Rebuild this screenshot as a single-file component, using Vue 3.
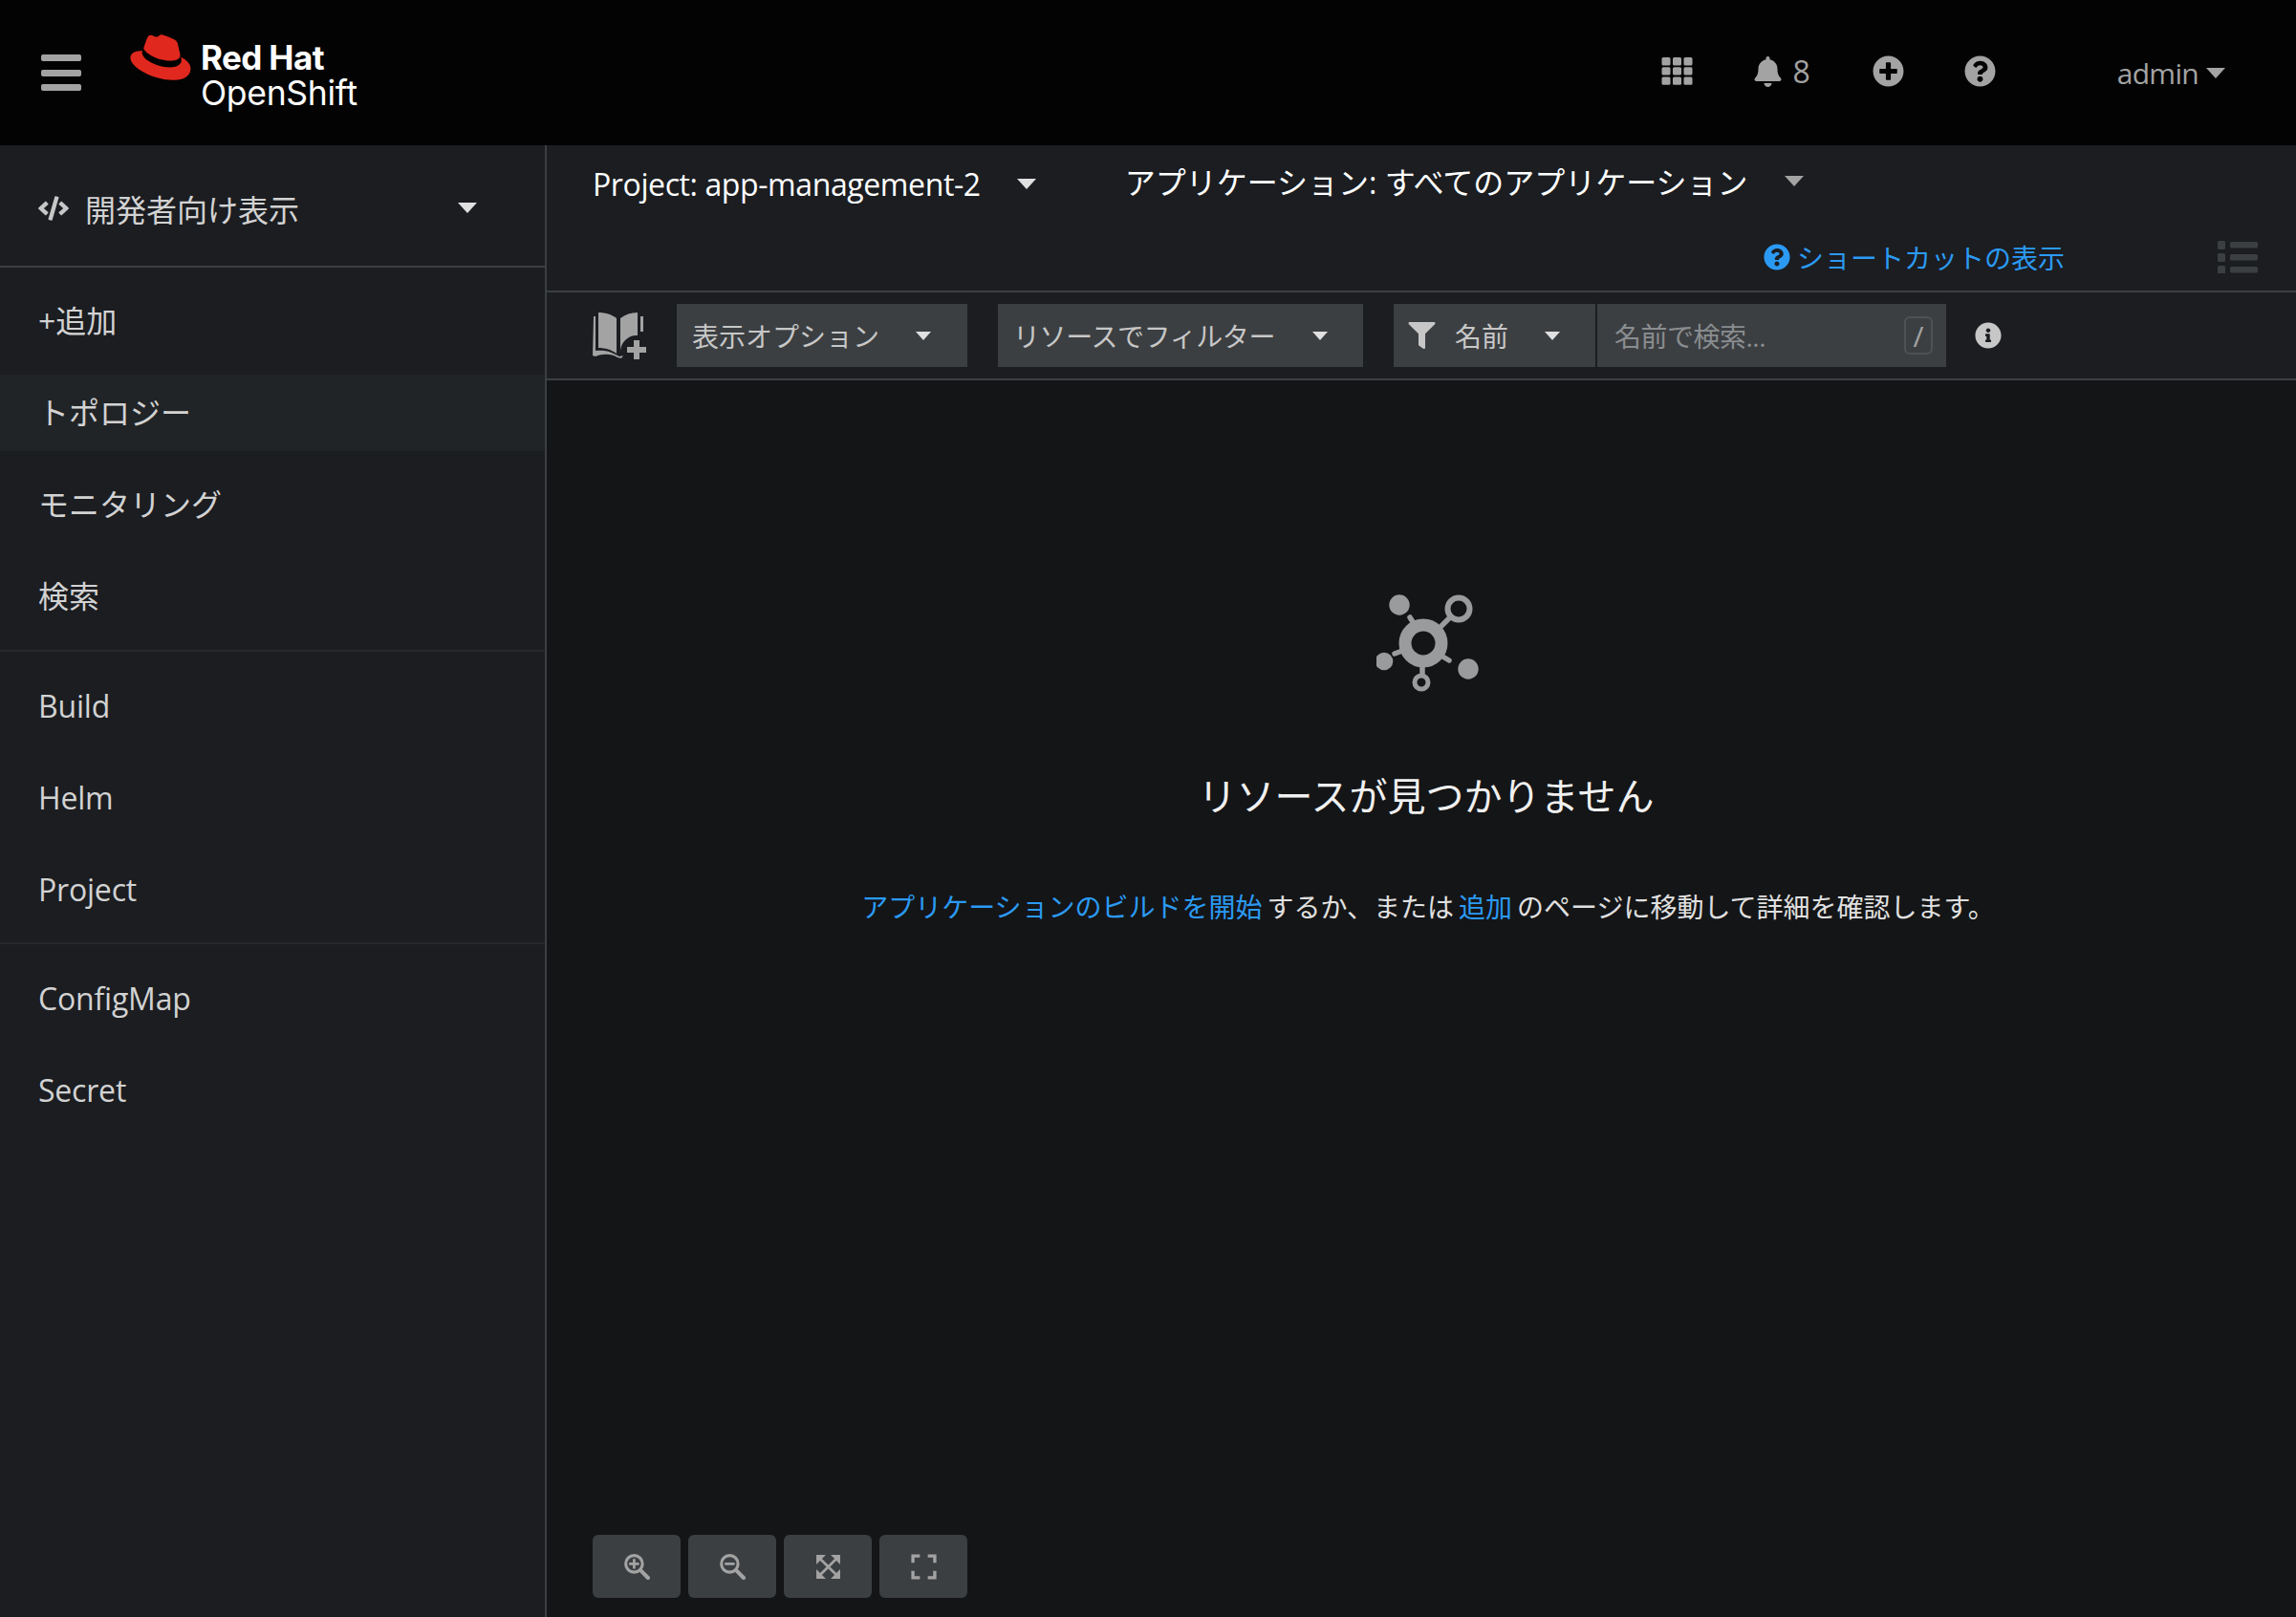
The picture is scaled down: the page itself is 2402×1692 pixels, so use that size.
<template>
  <div class="page">
    <header class="masthead">
      <button class="burger" aria-label="menu"><span></span><span></span><span></span></button>
      <div class="brand">
        <svg class="hat" viewBox="0 0 192 145">
          <path fill="#000" d="M40 40h125v70H40z" />
          <path fill="#e0281e" :d="hatPath" />
        </svg>
        <div class="wordmark">
          <div class="wm-top">Red Hat</div>
          <div class="wm-bottom">OpenShift</div>
        </div>
      </div>
      <div class="head-tools">
        <svg class="grid-ico" viewBox="0 0 32 29">
          <g v-for="r in 3" :key="r">
            <rect v-for="c in 3" :key="c" :x="(c - 1) * 11.5" :y="(r - 1) * 10.2" width="9" height="8.4" rx="1.5" />
          </g>
        </svg>
        <div class="bell-wrap">
          <svg class="bell-ico" viewBox="0 0 448 512"><path :d="icons.bell" /></svg>
          <span>8</span>
        </div>
        <svg class="circle-ico plus" viewBox="0 0 512 512"><path :d="icons.plus" /></svg>
        <svg class="circle-ico help" viewBox="0 0 512 512"><path :d="icons.question" /></svg>
        <div class="user">admin<i class="caret"></i></div>
      </div>
    </header>

    <div class="body">
      <aside class="sidebar">
        <div class="perspective">
          <svg class="code-ico" viewBox="0 0 640 512"><path :d="icons.code" /></svg>
          <span>開発者向け表示</span>
          <i class="caret light"></i>
        </div>
        <nav v-for="(group, g) in nav" :key="g" class="nav-group">
          <a v-for="item in group" :key="item" class="nav-item" :class="{ active: item === 'トポロジー' }">{{ item }}</a>
        </nav>
      </aside>

      <main class="content">
        <div class="context">
          <div class="selectors">
            <div class="sel project">Project: app-management-2<i class="caret light"></i></div>
            <div class="sel app">アプリケーション: すべてのアプリケーション<i class="caret"></i></div>
          </div>
          <div class="shortcut-row">
            <a class="shortcuts">
              <svg viewBox="0 0 512 512"><path :d="icons.question" /></svg>
              ショートカットの表示
            </a>
            <svg class="list-ico" viewBox="0 0 42 34">
              <g v-for="n in 3" :key="n">
                <rect x="0" :y="(n - 1) * 13" width="8" height="9" rx="1.5" />
                <rect x="13" :y="(n - 1) * 13 + 1" width="29" height="6.5" rx="1.5" />
              </g>
            </svg>
          </div>
        </div>

        <div class="toolbar">
          <svg class="book-ico" viewBox="0 0 56 50">
            <path d="M25 7C20 3 13 1 6 1v37c7 0 14 2 19 6z" />
            <path d="M29 7c5-4 11-6 18-6v24c-9-1-18 7-18 17z" />
            <path d="M1 5h2v36c7-1 15 0 21 4l4 2 4-1-2 3-4-1C20 44 10 44 3 47l-3-1z" />
            <path d="M50 5h3v16h-3z" />
            <path d="M43 30h6v7h7v6h-7v7h-6v-7h-7v-6h7z" />
          </svg>
          <div class="tb-select options">表示オプション<i class="caret light small"></i></div>
          <div class="tb-select resources">リソースでフィルター<i class="caret light small"></i></div>
          <div class="filter-group">
            <div class="tb-select name">
              <svg class="funnel" viewBox="0 0 512 512"><path :d="icons.filter" /></svg>
              名前<i class="caret light small"></i>
            </div>
            <div class="search">
              <span class="placeholder">名前で検索...</span>
              <kbd>/</kbd>
            </div>
          </div>
          <svg class="info-ico" viewBox="0 0 512 512"><path :d="icons.info" /></svg>
        </div>

        <section class="canvas">
          <div class="empty">
            <svg class="topology-ico" viewBox="0 0 120 100">
              <g stroke="#9a9b9d" fill="none">
                <circle cx="49" cy="52" r="19" stroke-width="13" />
                <path d="M76 26L63 39M35 25l5 8M27 60l-8 3M66 64l10 6M48 75v10" stroke-width="5.5" stroke-linecap="round" />
                <circle cx="86" cy="16" r="11.5" stroke-width="6" />
                <circle cx="47" cy="93" r="7" stroke-width="5" />
              </g>
              <g fill="#9a9b9d">
                <circle cx="24" cy="12" r="10.7" />
                <circle cx="8" cy="71" r="9.3" />
                <circle cx="96" cy="79" r="10.7" />
              </g>
            </svg>
            <h1>リソースが見つかりません</h1>
            <p>
              <a>アプリケーションのビルドを開始</a> するか、または <a>追加</a> のページに移動して詳細を確認します。
            </p>
          </div>
          <div class="zoom-bar">
            <button v-for="z in zoomButtons" :key="z.name" :aria-label="z.name">
              <svg viewBox="0 0 26 26" v-html="z.svg"></svg>
            </button>
          </div>
        </section>
      </main>
    </div>
  </div>
</template>

<script setup>
const hatPath = 'M127.47,83.49c12.51,0,30.61-2.58,30.61-17.46a14,14,0,0,0-.31-3.42l-7.45-32.36c-1.72-7.12-3.23-10.35-15.73-16.6C124.89,8.69,103.76.5,97.51.5,91.69.5,90,8,83.06,8c-6.68,0-11.64-5.6-17.89-5.6-6,0-9.91,4.09-12.93,12.5,0,0-8.41,23.72-9.49,27.16A6.43,6.43,0,0,0,42.53,44c0,9.22,36.3,39.45,84.94,39.45M160,72.07c1.73,8.19,1.73,9.05,1.73,10.13,0,14-15.74,21.77-36.43,21.77C78.54,104,37.58,76.6,37.58,58.49a18.45,18.45,0,0,1,1.51-7.33C22.27,52,.5,55,.5,74.22c0,31.48,74.59,70.28,133.65,70.28,45.28,0,56.7-20.48,56.7-36.65,0-12.72-11-27.16-30.83-35.78'

const icons = {
  bell: 'M224 512c35.32 0 63.97-28.65 63.97-64H160.03c0 35.35 28.65 64 63.97 64zm215.39-149.71c-19.32-20.76-55.47-51.99-55.47-154.29 0-77.7-54.48-139.9-127.94-155.16V32c0-17.67-14.32-32-31.98-32s-31.98 14.33-31.98 32v20.84C118.56 68.1 64.08 130.3 64.08 208c0 102.3-36.15 133.53-55.47 154.29-6 6.45-8.66 14.16-8.61 21.71.11 16.4 12.98 32 32.1 32h383.8c19.12 0 32-15.6 32.1-32 .05-7.55-2.61-15.27-8.61-21.71z',
  plus: 'M256 8C119 8 8 119 8 256s111 248 248 248 248-111 248-248S393 8 256 8zm144 276c0 6.6-5.4 12-12 12h-92v92c0 6.6-5.4 12-12 12h-56c-6.6 0-12-5.4-12-12v-92h-92c-6.6 0-12-5.4-12-12v-56c0-6.6 5.4-12 12-12h92v-92c0-6.6 5.4-12 12-12h56c6.6 0 12 5.4 12 12v92h92c6.6 0 12 5.4 12 12v56z',
  question: 'M504 256c0 136.997-111.043 248-248 248S8 392.997 8 256C8 119.083 119.043 8 256 8s248 111.083 248 248zM262.655 90c-54.497 0-89.255 22.957-116.549 63.758-3.536 5.286-2.353 12.415 2.715 16.258l34.699 26.31c5.205 3.947 12.621 3.008 16.665-2.122 17.864-22.658 30.113-35.797 57.303-35.797 20.429 0 45.698 13.148 45.698 32.958 0 14.976-12.363 22.667-32.534 33.976C247.128 238.528 216 254.941 216 296v4c0 6.627 5.373 12 12 12h56c6.627 0 12-5.373 12-12v-1.333c0-28.462 83.186-29.647 83.186-106.667 0-58.002-60.165-102-116.531-102zM256 338c-25.365 0-46 20.635-46 46 0 25.364 20.635 46 46 46s46-20.636 46-46c0-25.365-20.635-46-46-46z',
  info: 'M256 8C119.043 8 8 119.083 8 256c0 136.997 111.043 248 248 248s248-111.003 248-248C504 119.083 392.957 8 256 8zm0 110c23.196 0 42 18.804 42 42s-18.804 42-42 42-42-18.804-42-42 18.804-42 42-42zm56 254c0 6.627-5.373 12-12 12h-88c-6.627 0-12-5.373-12-12v-24c0-6.627 5.373-12 12-12h12v-64h-12c-6.627 0-12-5.373-12-12v-24c0-6.627 5.373-12 12-12h64c6.627 0 12 5.373 12 12v100h12c6.627 0 12 5.373 12 12v24z',
  filter: 'M487.976 0H24.028C2.71 0-8.047 25.866 7.058 40.971L192 225.941V432c0 7.831 3.821 15.17 10.237 19.662l80 55.98C298.02 518.69 320 507.493 320 487.98V225.941l184.947-184.97C520.021 25.896 509.338 0 487.976 0z',
  code: 'M278.9 511.5l-61-17.7c-6.4-1.8-10-8.5-8.2-14.9L346.2 8.7c1.8-6.4 8.5-10 14.9-8.2l61 17.7c6.4 1.8 10 8.5 8.2 14.9L293.8 503.3c-1.9 6.4-8.5 10.1-14.9 8.2zm-114-112.2l43.5-46.4c4.6-4.9 4.3-12.7-.8-17.2L117 256l90.6-79.7c5.1-4.5 5.5-12.3.8-17.2l-43.5-46.4c-4.5-4.8-12.1-5.1-17-.5L3.8 247.2c-5.1 4.7-5.1 12.8 0 17.5l144.1 135.1c4.9 4.6 12.5 4.4 17-.5zm327.2.6l144.1-135.1c5.1-4.7 5.1-12.8 0-17.5L492.1 112.1c-4.8-4.5-12.4-4.3-17 .5L431.6 159c-4.6 4.9-4.3 12.7.8 17.2L523 256l-90.6 79.7c-5.1 4.5-5.5 12.3-.8 17.2l43.5 46.4c4.5 4.9 12.1 5.1 17 .6z'
}

const nav = [
  ['+追加', 'トポロジー', 'モニタリング', '検索'],
  ['Build', 'Helm', 'Project'],
  ['ConfigMap', 'Secret']
]

const lens = '<circle cx="10" cy="10" r="8.4" fill="none" stroke="currentColor" stroke-width="3"/><path d="M16.5 16.5l7.5 7.5" stroke="currentColor" stroke-width="4" stroke-linecap="round"/>'
const zoomButtons = [
  { name: 'zoom in', svg: lens + '<path d="M10 5v10M5 10h10" stroke="currentColor" stroke-width="2.6"/>' },
  { name: 'zoom out', svg: lens + '<path d="M5 10h10" stroke="currentColor" stroke-width="2.6"/>' },
  { name: 'fit', svg: '<path d="M1 1h9.5L1 10.5zM25 1v9.5L15.5 1zM25 25h-9.5l9.5-9.5zM1 25v-9.5L10.5 25z" fill="currentColor"/><path d="M5 5l16 16M21 5L5 21" stroke="currentColor" stroke-width="2.6"/>' },
  { name: 'reset', svg: '<path d="M2 9V2h7M17 2h7v7M24 17v7h-7M9 24H2v-7" fill="none" stroke="currentColor" stroke-width="3.2"/>' }
]
</script>

<style>
html, body {
  margin: 0;
  background: #141517;
}
</style>

<style scoped>
.page {
  width: 2402px;
  height: 1692px;
  overflow: hidden;
  display: flex;
  flex-direction: column;
  font-family: "Open Sans", "Noto Sans CJK JP", sans-serif;
  color: #e0e0e0;
}

.masthead {
  height: 152px;
  flex: none;
  display: flex;
  align-items: center;
  background: #030303;
}

.burger {
  width: 42px;
  height: 38px;
  margin-left: 43px;
  padding: 0;
  border: 0;
  background: none;
  display: flex;
  flex-direction: column;
  justify-content: space-between;
}

.burger span {
  height: 7px;
  border-radius: 2px;
  background: #a3a3a3;
}

.brand {
  display: flex;
  align-items: center;
  margin-left: 51px;
}

.hat {
  width: 64px;
  height: 48px;
  margin-top: -32px;
}

.wordmark {
  margin-left: 10px;
  padding-top: 6px;
  color: #fff;
  line-height: 37px;
  font-family: "Inter", sans-serif;
}

.wm-top {
  font-size: 35px;
  font-weight: 700;
  letter-spacing: -0.6px;
}

.wm-bottom {
  font-size: 35.5px;
  font-weight: 400;
  letter-spacing: -0.3px;
}

.head-tools {
  display: flex;
  align-items: center;
  margin-left: auto;
  color: #a3a3a3;
}

.grid-ico {
  width: 33px;
  height: 29px;
  fill: #a3a3a3;
  margin-bottom: 3px;
}

.bell-wrap {
  display: flex;
  align-items: center;
  margin-left: 64px;
  margin-bottom: 3px;
  font-size: 32px;
}

.bell-ico {
  width: 29px;
  height: 32px;
  fill: #a3a3a3;
  margin-right: 11px;
}

.circle-ico {
  width: 33px;
  height: 33px;
  fill: #a3a3a3;
  margin-bottom: 3px;
}

.plus {
  margin-left: 65px;
}

.help {
  margin-left: 63px;
}

.user {
  display: flex;
  align-items: center;
  margin-left: 127px;
  margin-right: 74px;
  font-size: 30px;
  letter-spacing: -0.7px;
}

.caret {
  display: inline-block;
  width: 0;
  height: 0;
  margin-left: 8px;
  border-style: solid;
  border-width: 11px 10px 0;
  border-color: #a3a3a3 transparent transparent;
}

.caret.light {
  border-top-color: #e0e0e0;
}

.caret.small {
  border-width: 9px 8.5px 0;
}

.body {
  flex: 1;
  display: flex;
  min-height: 0;
}

.sidebar {
  width: 570px;
  flex: none;
  background: #1b1d21;
  border-right: 2px solid #3c3f42;
}

.perspective {
  height: 128px;
  box-sizing: border-box;
  display: flex;
  align-items: center;
  padding: 5px 71px 0 40px;
  border-bottom: 2px solid #3c3f42;
  font-size: 32px;
  color: #d2d2d2;
}

.code-ico {
  width: 32px;
  height: 26px;
  fill: #c7c7c7;
  margin-right: 17px;
}

.perspective .caret {
  margin-left: auto;
}

.nav-group {
  display: flex;
  flex-direction: column;
  gap: 16px;
  padding: 16px 0;
  border-bottom: 2px solid #26282c;
}

.nav-group:last-child {
  border-bottom: 0;
}

.nav-item {
  height: 80px;
  box-sizing: border-box;
  display: flex;
  align-items: center;
  padding-left: 40px;
  font-size: 32px;
  letter-spacing: -0.2px;
  color: #d2d2d2;
}

.nav-group:first-of-type .nav-item {
  padding-bottom: 5px;
  letter-spacing: 0;
}

.nav-item.active {
  background: #212427;
}

.content {
  flex: 1;
  min-width: 0;
  display: flex;
  flex-direction: column;
}

.context {
  height: 154px;
  flex: none;
  background: #1b1d21;
  border-bottom: 2px solid #3c3f42;
  box-sizing: border-box;
  padding: 0 40px 0 48px;
}

.selectors {
  height: 80px;
  display: flex;
  align-items: center;
}

.sel {
  display: flex;
  align-items: center;
  font-size: 32px;
  color: #fff;
}

.project {
  letter-spacing: -0.4px;
}

.sel .caret {
  margin-left: 38px;
}

.app {
  margin-left: 93px;
  margin-top: -6px;
}

.shortcut-row {
  height: 73px;
  display: flex;
  align-items: center;
  justify-content: flex-end;
}

.shortcuts {
  display: flex;
  align-items: center;
  font-size: 28px;
  color: #2b9af3;
  margin-right: 160px;
}

.shortcuts svg {
  width: 28px;
  height: 28px;
  fill: #2b9af3;
  margin-right: 7px;
}

.list-ico {
  width: 42px;
  height: 34px;
  fill: #3c3f42;
}

.toolbar {
  height: 92px;
  flex: none;
  box-sizing: border-box;
  display: flex;
  align-items: center;
  padding-left: 48px;
  background: #1b1d21;
  border-bottom: 2px solid #3c3f42;
}

.book-ico {
  width: 56px;
  height: 50px;
  fill: #a3a3a3;
  margin-right: 32px;
}

.tb-select {
  height: 66px;
  box-sizing: border-box;
  display: flex;
  align-items: center;
  background: #3c3f42;
  font-size: 28px;
  color: #c7c7c7;
  padding-left: 16px;
}

.tb-select .caret {
  margin-left: auto;
}

.options {
  width: 304px;
  padding-right: 38px;
  margin-right: 32px;
}

.resources {
  width: 382px;
  padding-right: 37px;
  margin-right: 32px;
  letter-spacing: -0.4px;
}

.filter-group {
  display: flex;
  gap: 2px;
}

.name {
  width: 211px;
  padding: 0 37px 0 15px;
}

.funnel {
  width: 29px;
  height: 28px;
  fill: #c7c7c7;
  margin-right: 20px;
}

.search {
  width: 365px;
  height: 66px;
  box-sizing: border-box;
  display: flex;
  align-items: center;
  justify-content: space-between;
  background: #3c3f42;
  padding: 0 14px 0 18px;
  font-size: 28px;
  color: #8a8d90;
}

.placeholder {
  letter-spacing: -0.5px;
}

kbd {
  width: 30px;
  height: 40px;
  box-sizing: border-box;
  display: flex;
  align-items: center;
  justify-content: center;
  border: 2px solid #4f5255;
  border-radius: 6px;
  font-family: "Open Sans", sans-serif;
  font-size: 30px;
  color: #a3a3a3;
}

.info-ico {
  width: 28px;
  height: 28px;
  fill: #c7c7c7;
  margin-left: 30px;
}

.canvas {
  flex: 1;
  min-height: 0;
  display: flex;
  flex-direction: column;
  background: #141517;
  padding: 0 0 20px 48px;
}

.empty {
  margin-left: -48px;
  padding-top: 218px;
  padding-left: 14px;
  display: flex;
  flex-direction: column;
  align-items: center;
}

.topology-ico {
  width: 120px;
  height: 110px;
  margin-left: 12px;
}

h1 {
  margin: 79px 0 0 -4px;
  font-size: 40px;
  font-weight: 400;
  line-height: 56px;
  color: #f0f0f0;
}

p {
  margin: 68px 0 0;
  font-size: 28px;
  line-height: 40px;
  word-spacing: -2.3px;
  color: #e0e0e0;
}

p a {
  color: #2b9af3;
}

.zoom-bar {
  margin-top: auto;
  display: flex;
  gap: 8px;
}

.zoom-bar button {
  width: 92px;
  height: 66px;
  padding: 0;
  border: 0;
  border-radius: 6px;
  background: #3c3f42;
  color: #a3a3a3;
  display: flex;
  align-items: center;
  justify-content: center;
}

.zoom-bar svg {
  width: 27px;
  height: 27px;
}
</style>
